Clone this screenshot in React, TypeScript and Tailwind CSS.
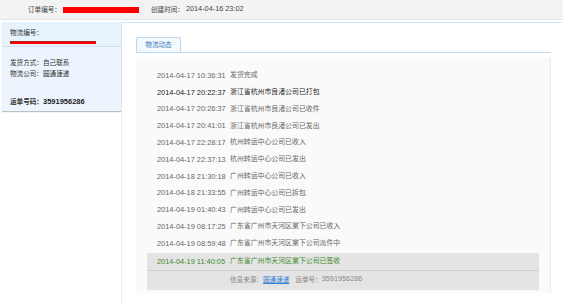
const rows = [
  { t: '2014-04-17 10:36:31', e: '发货完成' },
  { t: '2014-04-17 20:22:37', e: '浙江省杭州市良渚公司已打包', dark: true },
  { t: '2014-04-17 20:26:37', e: '浙江省杭州市良渚公司已收件' },
  { t: '2014-04-17 20:41:01', e: '浙江省杭州市良渚公司已发出' },
  { t: '2014-04-17 22:28:17', e: '杭州转运中心公司已收入' },
  { t: '2014-04-17 22:37:13', e: '杭州转运中心公司已发出' },
  { t: '2014-04-18 21:30:18', e: '广州转运中心公司已收入' },
  { t: '2014-04-18 21:33:55', e: '广州转运中心公司已拆包' },
  { t: '2014-04-19 01:40:43', e: '广州转运中心公司已发出' },
  { t: '2014-04-19 08:17:25', e: '广东省广州市天河区棠下公司已收入' },
  { t: '2014-04-19 08:59:48', e: '广东省广州市天河区棠下公司派件中' },
];

const font = "font-['Liberation_Sans','Noto_Sans_CJK_SC',sans-serif]";

export default function App() {
  return (
    <div className={`w-[585px] h-[304px] bg-white overflow-hidden text-[#555] ${font}`}>
      {/* 顶部订单信息 */}
      <div className="w-[563px] h-[20px] bg-[#f3f3f3] border-b border-[#e4e4e4] flex items-center pl-[28px]">
        <span className="text-[6.6px] text-[#444]">订单编号：</span>
        <span className="w-[76px] h-[6px] bg-[#ff0000] ml-[2px]" />
        <span className="text-[6.6px] text-[#444] ml-[12px]">创建时间：</span>
        <span className="text-[7.3px] text-[#444] ml-[2px]">2014-04-16 23:02</span>
      </div>

      <div className="flex mt-[2px] h-[282px]">
        {/* 左侧物流信息 */}
        <div className="w-[122px] border-r border-[#e6eff8] pl-[2px]">
          <div className="w-[119px] bg-[#e6f2fc] shadow-[0_1px_1px_rgba(0,0,0,0.25)]">
            <div className="h-[25px] border-b border-[#cddff0] pl-[8px] pt-[6px]">
              <div className="text-[6.6px] text-[#333] leading-[9px]">物流编号：</div>
              <div className="w-[86px] h-[3px] bg-[#ff0000] mt-[4px] border-t border-dotted border-[#444]" />
            </div>
            <div className="pl-[8px] pt-[10px] pb-[4px] bg-[#ecf5fd] text-[6.6px] text-[#333] leading-[11px]">
              <div>发货方式：自己联系</div>
              <div>物流公司：圆通速递</div>
              <div className="mt-[17px] font-bold">
                运单号码：<span className="text-[7.5px] text-[#222]">3591956286</span>
              </div>
            </div>
          </div>
        </div>

        {/* 右侧物流动态 */}
        <div className="w-[441px] border-t border-[#d6e8f8] pl-[14px] pt-[14px]">
          <div className="w-[415px] border-b border-[#bcd8f2] flex">
            <div className="w-[45px] h-[15px] border border-b-0 border-[#bcd8f2] rounded-t-[2px] bg-[#f4f9fe] flex items-center justify-center text-[6.6px] text-[#3a7cc0]">
              物流动态
            </div>
          </div>
          <div className="w-[415px] h-[236px] mt-[4px] bg-[#fafafa] border-r border-[#ececec] pt-[10px]">
            {rows.map(r => (
              <div key={r.t} className={`h-[16.8px] flex items-center pl-[21px] ${r.dark ? 'text-[#222]' : 'text-[#666]'}`}>
                <span className="w-[73px] text-[7.4px]">{r.t}</span>
                <span className="text-[6.9px]">{r.e}</span>
              </div>
            ))}
            <div className="ml-[11px] w-[392px] h-[37px] bg-[#e4e4e4] mt-[1px]">
              <div className="h-[18px] flex items-center pl-[10px] text-[#3c8a2c] border-b border-[#cfcfcf]">
                <span className="w-[73px] text-[7.4px]">2014-04-19 11:40:05</span>
                <span className="text-[6.9px]">广东省广州市天河区棠下公司已签收</span>
              </div>
              <div className="h-[18px] flex items-center pl-[83px] text-[6.6px] text-[#888]">
                信息来源：<span className="text-[#2f7ed8] underline">圆通速递</span>
                <span className="ml-[6px]">运单号：</span>
                <span className="text-[7.3px]">3591956286</span>
              </div>
            </div>
          </div>
        </div>
      </div>
    </div>
  );
}
